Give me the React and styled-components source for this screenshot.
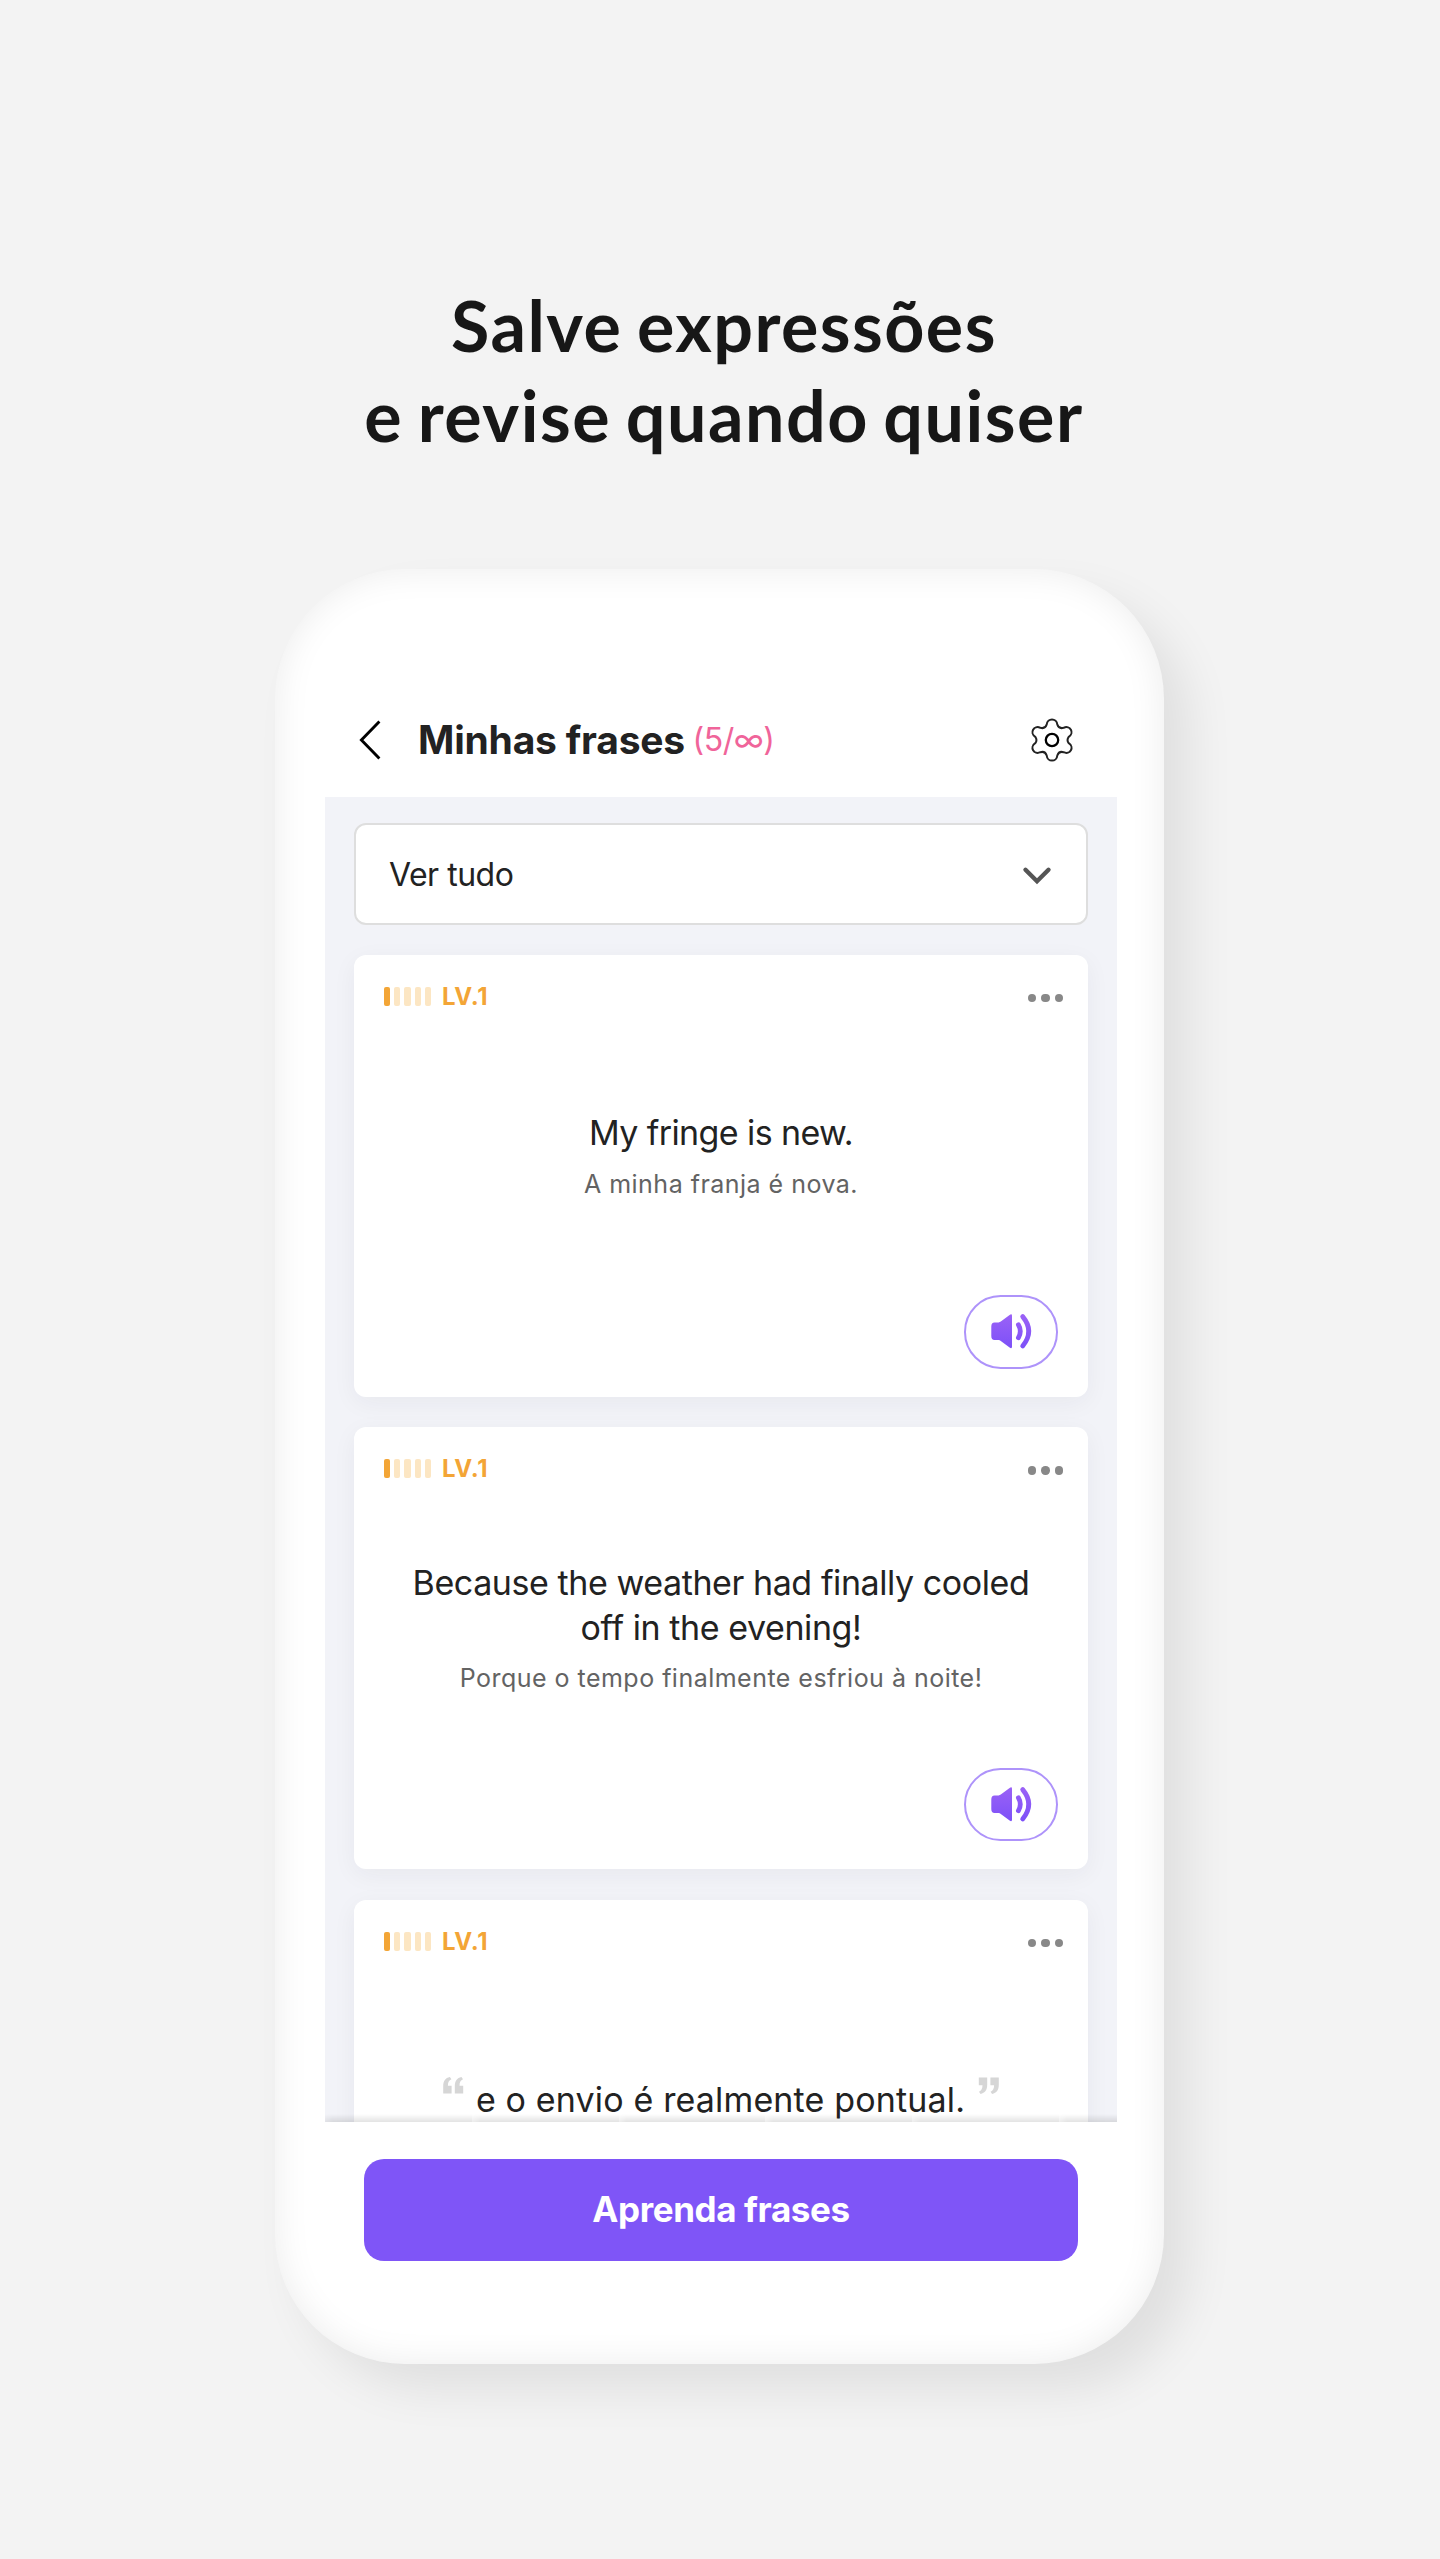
import React from "react";
import styled, { createGlobalStyle } from "styled-components";

const phrases = [
  { level: 1, lines: ["My fringe is new."], translation: "A minha franja é nova.", spacing: "-0.6px" },
  {
    level: 1,
    lines: ["Because the weather had finally cooled", "off in the evening!"],
    translation: "Porque o tempo finalmente esfriou à noite!",
    spacing: "-0.42px",
  },
  { level: 1, lines: ["e o envio é realmente pontual."], quoted: true, spacing: "0.15px" },
];

function SpeakerIcon() {
  return (
    <svg width="41" height="35" viewBox="0 0 41 35" fill="none">
      <defs>
        <linearGradient id="speaker" x1="0" y1="0" x2="0" y2="35" gradientUnits="userSpaceOnUse">
          <stop offset="0" stopColor="#9b62f6" />
          <stop offset="1" stopColor="#7c50f8" />
        </linearGradient>
      </defs>
      <path
        d="M3.5 8.4H7.6Q8.8 8.4 9.8 7.6L18.6 0.9Q21 -0.6 21 1.8V32.7Q21 35.1 18.6 33.6L9.8 26.9Q8.8 26.1 7.6 26.1H3.5Q0.3 26.1 0.3 22V12.5Q0.3 8.4 3.5 8.4Z"
        fill="url(#speaker)"
      />
      <path d="M27.4 10.8Q31.2 17.2 27.4 23.7" stroke="url(#speaker)" strokeWidth="4.8" strokeLinecap="round" />
      <path d="M31.7 2.6Q43.8 17.2 31.7 32" stroke="url(#speaker)" strokeWidth="4.8" strokeLinecap="round" />
    </svg>
  );
}

function GearIcon() {
  return (
    <svg width="44" height="44" viewBox="-22 -22 44 44" fill="none" stroke="#222" strokeWidth="2">
      <path d="M-5.3 -15.5C-4.8 -22.3 4.8 -22.3 5.3 -15.5C6.4 -12.2 8.4 -11.2 11.6 -12.2C18.2 -15.3 22.8 -7 16.7 -3.2C15.4 -1.4 15.4 1.4 16.7 3.2C22.8 7 18.2 15.3 11.6 12.2C8.4 11.2 6.4 12.2 5.3 15.5C4.8 22.3 -4.8 22.3 -5.3 15.5C-6.4 12.2 -8.4 11.2 -11.6 12.2C-18.2 15.3 -22.8 7 -16.7 3.2C-15.4 1.4 -15.4 -1.4 -16.7 -3.2C-22.8 -7 -18.2 -15.3 -11.6 -12.2C-8.4 -11.2 -6.4 -12.2 -5.3 -15.5Z" />
      <circle r="6.2" stroke="#000" strokeWidth="2.3" />
    </svg>
  );
}

function QuoteIcon() {
  return (
    <svg width="21" height="17" viewBox="0 0 21 17" fill="#d6d6d6">
      <path d="M4.9 8.7H8.6V16.6H0.2V9.5C0.2 4 2.4 1.1 6.9 0.1L8.4 2.3C6 3.4 4.9 5.2 4.9 8.7Z" />
      <path d="M16.5 8.7H20.2V16.6H11.8V9.5C11.8 4 14 1.1 18.5 0.1L20 2.3C17.6 3.4 16.5 5.2 16.5 8.7Z" />
    </svg>
  );
}

function PhraseCard({ phrase }) {
  return (
    <Card>
      <CardTop>
        <Level>
          {[1, 2, 3, 4, 5].map((n) => (
            <LevelBar key={n} $on={n <= phrase.level} />
          ))}
          <LevelText>LV.{phrase.level}</LevelText>
        </Level>
        <More>
          <Dot />
          <Dot />
          <Dot />
        </More>
      </CardTop>
      <CardBody $quoted={phrase.quoted}>
        {phrase.quoted && <Quote><QuoteIcon /></Quote>}
        <Sentence $spacing={phrase.spacing}>
          {phrase.lines.map((line) => (
            <Line key={line}>{line}</Line>
          ))}
        </Sentence>
        {phrase.quoted && <Quote $close><QuoteIcon /></Quote>}
        {phrase.translation && <Translation>{phrase.translation}</Translation>}
      </CardBody>
      {!phrase.quoted && (
        <CardBottom>
          <Speak><SpeakerIcon /></Speak>
        </CardBottom>
      )}
    </Card>
  );
}

export default function App() {
  return (
    <Page>
      <GlobalStyle />
      <Headline>
        <HeadLine $spacing="1.45px">Salve expressões</HeadLine>
        <HeadLine $spacing="1.5px">e revise quando quiser</HeadLine>
      </Headline>
      <Phone>
        <Header>
          <svg width="22" height="42" viewBox="0 0 22 42" fill="none" stroke="#000" strokeWidth="2.9">
            <path d="M20.4 2.6L2.4 21L20.4 39.4" />
          </svg>
          <Title>Minhas frases</Title>
          <Count>(5/∞)</Count>
          <GearIcon />
        </Header>
        <Content>
          <Select>
            <SelectText>Ver tudo</SelectText>
            <Arrow width="28" height="18" viewBox="0 0 28 18" fill="none" stroke="#555" strokeWidth="4.4" strokeLinecap="round">
              <path d="M2.5 2.8L14 14.2L25.5 2.8" />
            </Arrow>
          </Select>
          {phrases.map((phrase) => (
            <PhraseCard key={phrase.lines[0]} phrase={phrase} />
          ))}
          <Fade />
        </Content>
        <Footer>
          <LearnButton>Aprenda frases</LearnButton>
        </Footer>
      </Phone>
    </Page>
  );
}

const GlobalStyle = createGlobalStyle`
  * {
    box-sizing: border-box;
  }
  body {
    margin: 0;
    background: #f3f3f3;
  }
  svg {
    display: block;
    flex-shrink: 0;
    overflow: visible;
  }
`;

const Page = styled.div`
  height: 2559px;
  padding-top: 280px;
  background: #f3f3f3;
  font-family: Inter, "Liberation Sans", sans-serif;
  color: #222;
  overflow: hidden;
`;

const Headline = styled.h1`
  margin: 0 0 109px;
  padding-left: 8px;
  font: 700 70px/90px Lato, sans-serif;
  text-align: center;
  color: #171717;
`;

const HeadLine = styled.span`
  display: block;
  white-space: nowrap;
  letter-spacing: ${(p) => p.$spacing};
  word-spacing: -4px;
`;

const Phone = styled.div`
  width: 889px;
  height: 1795px;
  margin-left: 275px;
  padding: 108px 47px 0 50px;
  border-radius: 130px;
  background: #fff;
  box-shadow: inset 0 0 36px rgba(0, 0, 0, 0.08), 26px 26px 46px rgba(0, 0, 0, 0.08);
`;

const Header = styled.div`
  display: flex;
  align-items: center;
  height: 120px;
  padding: 5px 43px 0 34px;

  > svg:last-child {
    margin-left: auto;
  }
`;

const Title = styled.h2`
  margin: 1px 0 0 37px;
  font-size: 39px;
  font-weight: 700;
  line-height: 48px;
  letter-spacing: -0.2px;
  white-space: nowrap;
`;

const Count = styled.span`
  margin: 1px 0 0 7.5px;
  font-size: 32px;
  line-height: 40px;
  letter-spacing: -0.5px;
  color: #f0649a;
  white-space: nowrap;
`;

const Content = styled.div`
  position: relative;
  width: 792px;
  height: 1325px;
  padding: 26px 29px 0;
  background: #f2f3f8;
  overflow: hidden;
`;

const Select = styled.div`
  display: flex;
  align-items: center;
  justify-content: space-between;
  height: 102px;
  margin-bottom: 30px;
  padding: 0 35px 0 33px;
  border: 2px solid #dedede;
  border-radius: 12px;
  background: #fff;
`;

const SelectText = styled.span`
  font-size: 32px;
  letter-spacing: -0.5px;
`;

const Arrow = styled.svg`
  margin-top: 3px;
`;

const Card = styled.div`
  display: flex;
  flex-direction: column;
  height: 442px;
  margin-bottom: 30.4px;
  border-radius: 12px;
  background: #fff;
  box-shadow: 0 6px 24px rgba(30, 30, 60, 0.05);
`;

const CardTop = styled.div`
  display: flex;
  align-items: center;
  justify-content: space-between;
  height: 84px;
  padding: 0 25px 0 30px;
`;

const Level = styled.div`
  display: flex;
  align-items: center;
  gap: 4px;
`;

const LevelBar = styled.span`
  width: 6.2px;
  height: 19px;
  margin-bottom: 1px;
  border-radius: 2px;
  background: ${(p) => (p.$on ? "#f3a536" : "#fce6c3")};
`;

const LevelText = styled.span`
  margin-left: 7px;
  font-size: 24px;
  font-weight: 700;
  line-height: 28px;
  letter-spacing: 0.7px;
  color: #f3a536;
`;

const More = styled.div`
  display: flex;
  gap: 5px;
  padding-top: 2px;
`;

const Dot = styled.span`
  width: 8.4px;
  height: 8.4px;
  border-radius: 50%;
  background: #888;
`;

const CardBody = styled.div`
  display: flex;
  flex-direction: ${(p) => (p.$quoted ? "row" : "column")};
  align-items: center;
  justify-content: center;
  height: 230px;
  padding-top: ${(p) => (p.$quoted ? "3px" : "4px")};
  text-align: center;
`;

const Sentence = styled.p`
  margin: 0;
  font-size: 34px;
  line-height: 44.4px;
  letter-spacing: ${(p) => p.$spacing};
`;

const Line = styled.span`
  display: block;
  white-space: nowrap;
`;

const Translation = styled.p`
  margin: 11px 0 0;
  font-size: 25px;
  line-height: 34px;
  letter-spacing: 0.48px;
  color: #636363;
`;

const Quote = styled.span`
  margin: ${(p) => (p.$close ? "0 0 30px 13px" : "0 12px 30px 0")};
  transform: ${(p) => (p.$close ? "rotate(180deg)" : "none")};
`;

const CardBottom = styled.div`
  display: flex;
  justify-content: flex-end;
  margin-top: auto;
  padding: 0 30.5px 28.5px 0;
`;

const Speak = styled.div`
  display: flex;
  align-items: center;
  justify-content: center;
  width: 94px;
  height: 73.4px;
  padding-left: 2px;
  border: 2px solid #ae93fa;
  border-radius: 36.7px;
`;

/* shadow cast by the footer over the list, tiled every 147px */
const Fade = styled.div`
  position: absolute;
  left: 0;
  right: 0;
  bottom: 0;
  height: 8px;
  background: linear-gradient(rgba(0, 0, 0, 0), rgba(0, 0, 0, 0.11));
  mask-image: repeating-linear-gradient(90deg, rgba(0, 0, 0, 0.6) 0, #000 8px, #000 146.8px);
`;

const Footer = styled.div`
  padding: 36.5px 39px 0;
`;

const LearnButton = styled.button`
  display: block;
  width: 714px;
  height: 102.5px;
  padding: 0 0 2px;
  border: 0;
  border-radius: 20px;
  background: #7f55f7;
  color: #fff;
  font-family: inherit;
  font-size: 35px;
  font-weight: 700;
  letter-spacing: -0.4px;
`;
